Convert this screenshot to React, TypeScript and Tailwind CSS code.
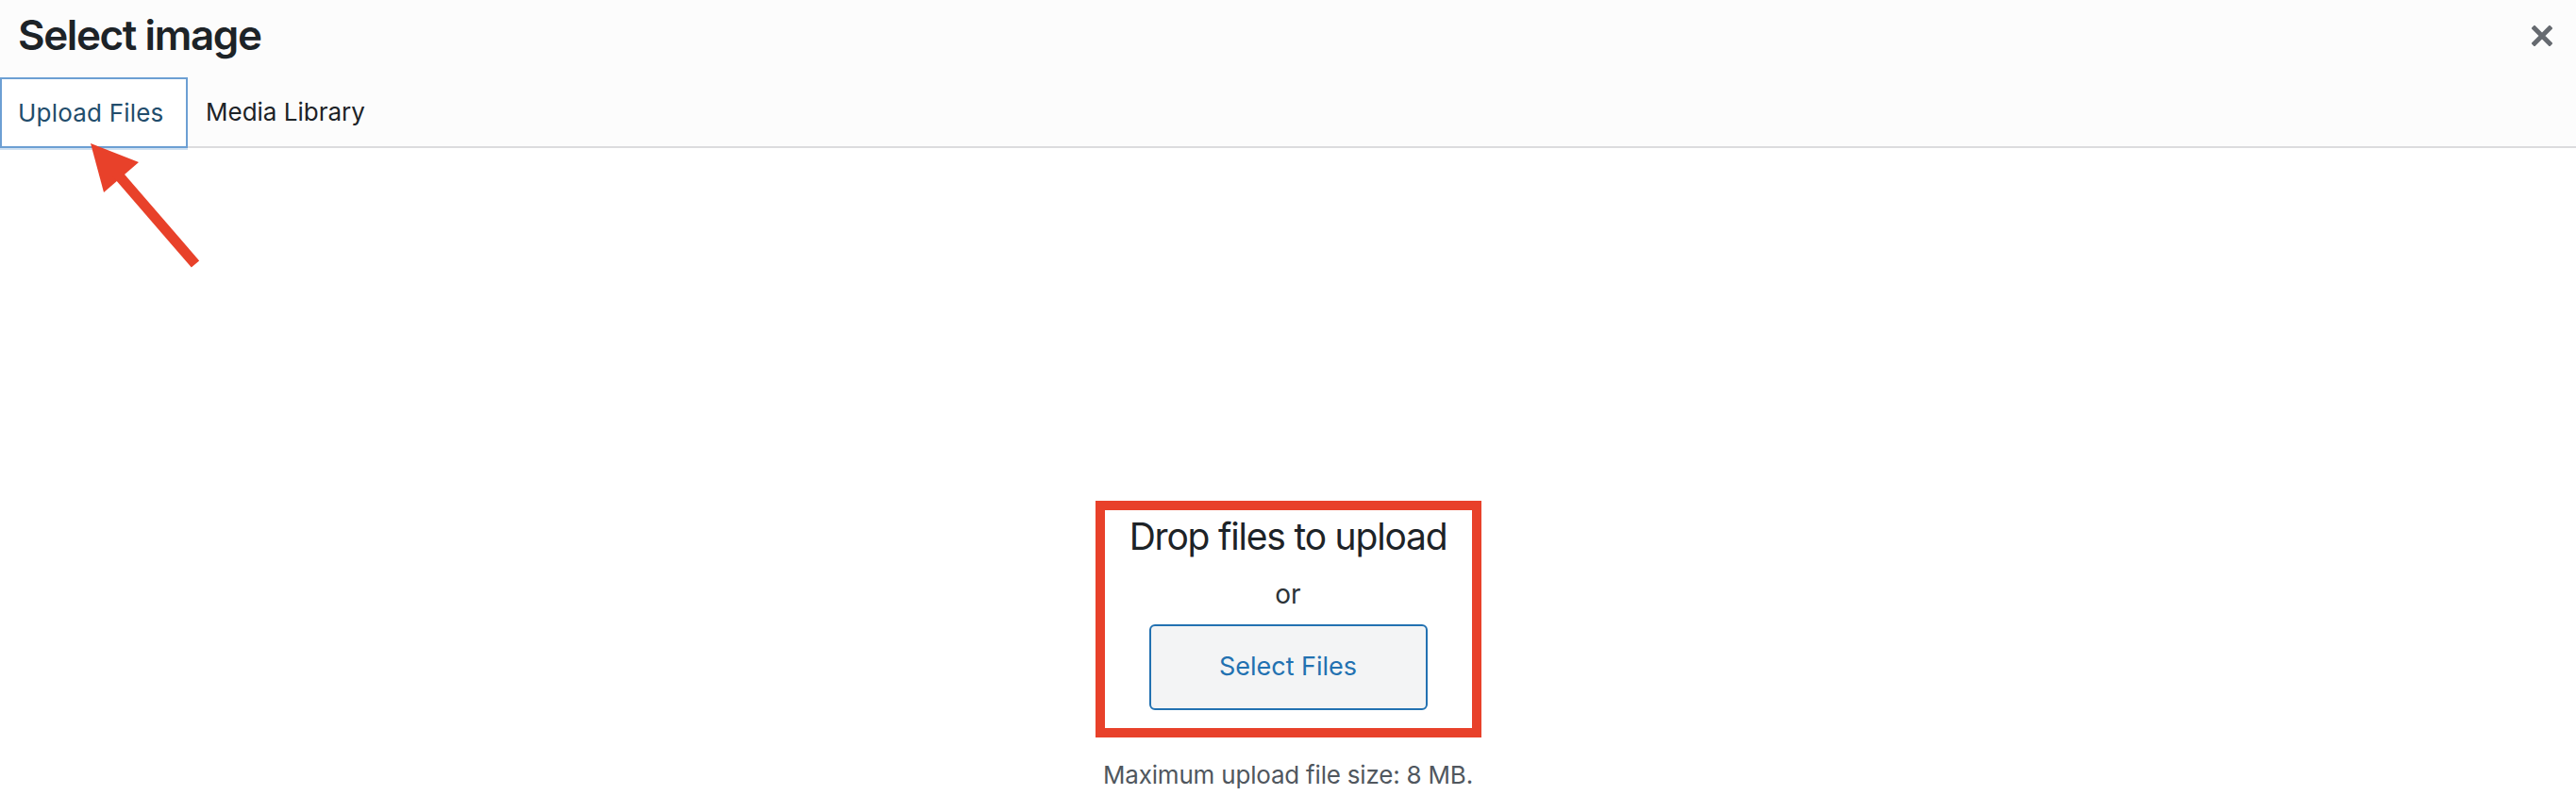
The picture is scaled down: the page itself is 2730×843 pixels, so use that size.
import React from 'react';

const CloseIcon: React.FC = () => (
  <svg width="22" height="22" viewBox="0 0 22 22" className="block">
    <path d="M3 3 L19 19 M19 3 L3 19" stroke="#666a70" strokeWidth="5" strokeLinecap="square" />
  </svg>
);

const App: React.FC = () => {
  return (
    <div
      className="relative w-full h-[843px] bg-white overflow-hidden text-[#1d2327]"
      style={{ fontFamily: 'Inter, "Liberation Sans", sans-serif' }}
    >
      {/* Header */}
      <div className="bg-[#fcfcfc] border-b-2 border-[#dcdcde]">
        <div className="h-[82px] flex items-start justify-between pl-[19px] pr-[25px]">
          <h1 className="mt-[15px] text-[44px] leading-[44px] font-semibold tracking-[-1.4px]">Select image</h1>
          <button className="mt-[27px]">
            <CloseIcon />
          </button>
        </div>
        <div className="flex items-stretch h-[73px]">
          <div className="w-[199px] -mb-[2px] bg-white border-2 border-[#6c9fd3] shadow-[0_2px_0_#cfe0f1] flex items-center pl-[17px] text-[26px] tracking-[0.2px] text-[#224d6c]">
            Upload Files
          </div>
          <div className="flex items-center pl-[19px] text-[26px]">Media Library</div>
        </div>
      </div>

      {/* Upload area */}
      <div className="flex flex-col items-center pt-[374px]">
        <div className="w-[409px] border-[10px] border-[#e8412a] flex flex-col items-center pt-[4px] pb-[19px]">
          <p className="text-[39px] leading-[48px] tracking-[-1.2px]">Drop files to upload</p>
          <p className="mt-[20px] text-[28px] leading-[34px] text-[#2c3338]">or</p>
          <button className="mt-[15px] w-[295px] h-[91px] rounded-[6px] border-2 border-[#2271b1] bg-[#f3f4f5] text-[27px] text-[#2271b1]">
            Select Files
          </button>
        </div>
        <p className="mt-[24px] text-[26px] leading-[32px] tracking-[-0.2px] text-[#50575e]">Maximum upload file size: 8 MB.</p>
      </div>

      {/* Annotation arrow */}
      <svg className="absolute left-0 top-0" width="260" height="300" viewBox="0 0 260 300">
        <polygon points="96,152 147,172 110,204" fill="#e8412a" />
        <line x1="124" y1="184" x2="207" y2="280" stroke="#e8412a" strokeWidth="11" />
      </svg>
    </div>
  );
};

export default App;
